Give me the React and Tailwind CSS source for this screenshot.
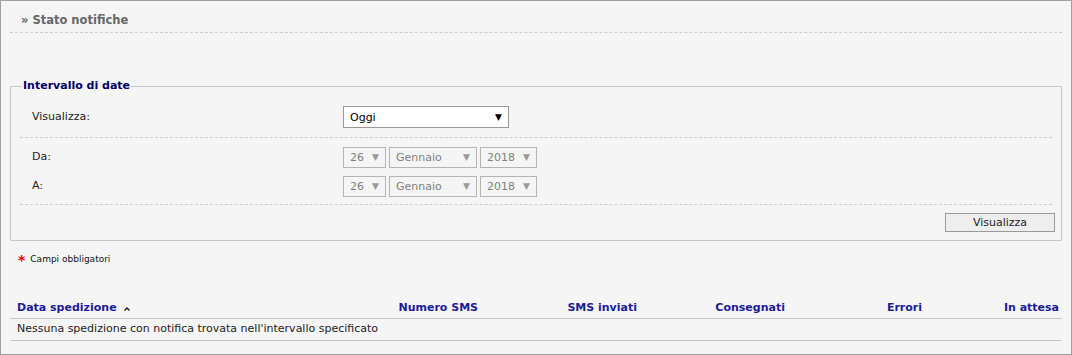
import React from 'react';

const font = { fontFamily: '"DejaVu Sans", Verdana, sans-serif' };

function FakeSelect({ value, width, disabled }) {
  return (
    <div
      className={`flex items-center justify-between pl-[6px] pr-[6px] border ${
        disabled ? 'h-[21px] border-[#b4b4b4] bg-[#f5f5f5] text-[#808080]' : 'h-[22px] border-[#999] bg-white text-black'
      }`}
      style={{ width }}
    >
      <span className="text-[11px] leading-none">{value}</span>
      <span className={`text-[9px] leading-none ${disabled ? 'text-[#999]' : 'text-black'}`}>▼</span>
    </div>
  );
}

function DateRow({ label }) {
  return (
    <div className="flex items-center h-[29px]">
      <div className="w-[323px] pl-[12px] text-[11px] text-[#222]">{label}</div>
      <div className="flex gap-[3px]">
        <FakeSelect value="26" width={43} disabled />
        <FakeSelect value="Gennaio" width={88} disabled />
        <FakeSelect value="2018" width={57} disabled />
      </div>
    </div>
  );
}

export default function App() {
  const cols = ['Numero SMS', 'SMS inviati', 'Consegnati', 'Errori', 'In attesa'];
  return (
    <div className="w-[1072px] h-[355px] bg-[#f5f5f5] border border-[#a0a0a0]" style={font}>
      <div className="px-[9px]">
        <div className="h-[32px] border-b border-dashed border-[#ccc] flex items-center pl-[11px] pt-[8px]">
          <span className="text-[11.5px] font-bold text-[#666]">» Stato notifiche</span>
        </div>

        <fieldset className="mt-[45px] border border-[#c8c8c8] px-[9px] pb-[8px] pt-[1px]">
          <legend className="ml-[2px] px-[1px] text-[11px] font-bold text-[#000066]">Intervallo di date</legend>
          <div className="flex items-center h-[42px] pt-[2px] border-b border-dashed border-[#ccc]">
            <div className="w-[323px] pl-[12px] text-[11px] text-[#222]">Visualizza:</div>
            <FakeSelect value="Oggi" width={166} />
          </div>
          <div className="pt-[5px] pb-[3px] border-b border-dashed border-[#ccc]">
            <DateRow label="Da:" />
            <DateRow label="A:" />
          </div>
          <div className="flex justify-end pt-[8px] -mr-[3px]">
            <button className="w-[110px] h-[19px] border border-[#999] bg-[#eee] text-[11px] text-[#222] leading-none">
              Visualizza
            </button>
          </div>
        </fieldset>

        <div className="mt-[12px] pl-[8px] flex items-center gap-[5px]">
          <span className="text-[#e00] text-[14px] font-bold leading-none">*</span>
          <span className="text-[9px] text-[#111]">Campi obbligatori</span>
        </div>

        <div className="mt-[33px]">
          <div className="grid grid-cols-[370px_98px_159px_148px_137px_1fr] h-[19px] items-center border-b border-[#c8c8c8] text-[11px] font-bold text-[#1c1c99]">
            <div className="pl-[7px] flex items-center gap-[6px]">
              Data spedizione
              <svg width="8" height="6" viewBox="0 0 8 6"><path d="M1.5 4.5 L4 2 L6.5 4.5" stroke="#111" strokeWidth="1.3" fill="none" /></svg>
            </div>
            {cols.map((c, i) => (
              <div key={c} className={`text-right ${i === cols.length - 1 ? 'pr-[3px]' : ''}`}>{c}</div>
            ))}
          </div>
          <div className="h-[22px] flex items-center pl-[7px] border-b border-[#c8c8c8] text-[11px] text-[#222]">
            Nessuna spedizione con notifica trovata nell'intervallo specificato
          </div>
        </div>
      </div>
    </div>
  );
}
